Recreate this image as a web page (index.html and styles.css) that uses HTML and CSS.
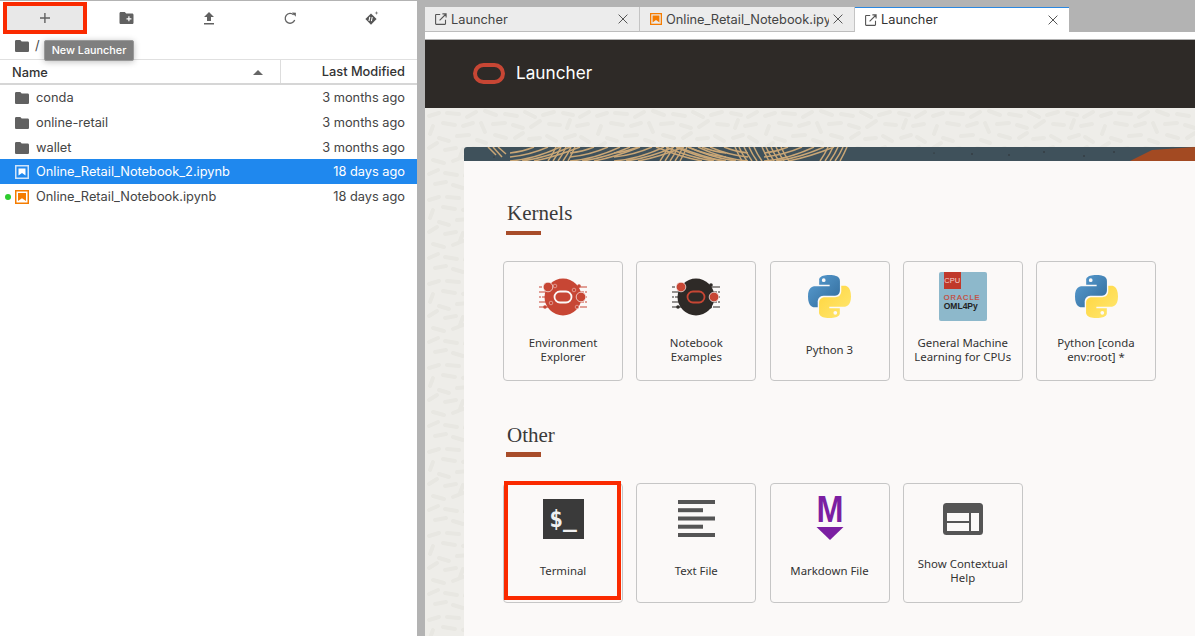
FILE: index.html
```html
<!DOCTYPE html>
<html lang="en">
<head>
<meta charset="utf-8">
<title>Launcher</title>
<link rel="stylesheet" href="styles.css">
</head>
<body>
<svg class="defs" width="0" height="0" aria-hidden="true">
  <defs>
    <linearGradient id="pyb" x1="0" y1="0" x2="1" y2="1"><stop offset="0" stop-color="#5a9fd4"/><stop offset="1" stop-color="#306998"/></linearGradient>
    <linearGradient id="pyy" x1="0" y1="0" x2="1" y2="1"><stop offset="0" stop-color="#ffe873"/><stop offset="1" stop-color="#ffd43b"/></linearGradient>
    <symbol id="python" viewBox="0 0 110 110">
      <path fill="url(#pyb)" fill-rule="evenodd" d="M54.9 0C26.8 0 28.6 12.2 28.6 12.2v12.6h26.8v3.8H17.9S0 26.6 0 54.9c0 28.3 15.6 27.3 15.6 27.3h9.3V69s-.5-15.6 15.4-15.6h26.5s14.9.2 14.9-14.4V14.8S84.1 0 54.9 0zM40.2 8.5a4.8 4.8 0 1 1 0 9.6 4.8 4.8 0 0 1 0-9.6z"/>
      <path fill="url(#pyy)" fill-rule="evenodd" transform="rotate(180 55 55)" d="M54.9 0C26.8 0 28.6 12.2 28.6 12.2v12.6h26.8v3.8H17.9S0 26.6 0 54.9c0 28.3 15.6 27.3 15.6 27.3h9.3V69s-.5-15.6 15.4-15.6h26.5s14.9.2 14.9-14.4V14.8S84.1 0 54.9 0zM40.2 8.5a4.8 4.8 0 1 1 0 9.6 4.8 4.8 0 0 1 0-9.6z"/>
    </symbol>
    <symbol id="folder" viewBox="0 0 14 12">
      <path d="M1.3 0h4l1.4 1.6h6c.7 0 1.3.6 1.3 1.3v7.8c0 .7-.6 1.3-1.3 1.3H1.3C.6 12 0 11.4 0 10.7V1.3C0 .6.6 0 1.3 0z"/>
    </symbol>
    <symbol id="launch" viewBox="0 0 12 12">
      <path fill="none" stroke="currentColor" stroke-width="1.1" d="M5.2 1.500H1.200a.6.6 0 0 0-.6.6v8.700c0 .3.3.6.6.6h8.700c.3 0 .6-.3.6-.6V6.800M4.600 7.400 11 1M7.400.9h3.700v3.700"/>
    </symbol>
    <symbol id="close" viewBox="0 0 10 10">
      <path fill="none" stroke="currentColor" stroke-width="1" d="M.6.6l8.800 8.800M9.400.6.6 9.400"/>
    </symbol>
    <g id="sw-a">
      <path d="M0 14Q25 12 50 0M0 10Q20 8 38 0M0 6Q12 5 24 0M12 14Q35 11 60 0M24 14Q45 10 70 0"/>
    </g>
    <g id="sw-b">
      <path d="M0 14Q5 7 8 0M5 14Q10 7 13 0M10 14Q15 7 18 0M15 14Q20 7 23 0M20 14Q24 7 27 0"/>
    </g>
  </defs>
</svg>

<div class="app">
  <aside class="sidebar">
    <div class="toolbar">
      <button class="tool tool-marked" type="button">
        <svg width="12" height="12" viewBox="0 0 12 12"><path d="M5.200 1h1.400v4.300H11v1.400H6.600V11H5.200V6.700H1V5.300h4.200z" fill="#616161"/></svg>
      </button>
      <button class="tool" type="button">
        <svg width="15" height="12" viewBox="0 0 14 12"><path fill="#616161" fill-rule="evenodd" d="M1.300 0h4l1.400 1.600h6c.7 0 1.300.6 1.300 1.300v7.800c0 .7-.6 1.300-1.300 1.300H1.300C.6 12 0 11.400 0 10.700V1.300C0 .6.6 0 1.300 0zM8.800 4.300v1.900H7v1.200h1.800v1.900H10V7.400h1.900V6.200H10V4.300z"/></svg>
      </button>
      <button class="tool" type="button">
        <svg width="12" height="13" viewBox="0 0 12 13"><path fill="#616161" d="M6 0l5 5H8v4H4V5H1zM1 11h10v1.600H1z"/></svg>
      </button>
      <button class="tool" type="button">
        <svg width="13" height="13" viewBox="0 0 13 13"><path fill="none" stroke="#616161" stroke-width="1.300" d="M10.700 8.100A4.900 4.900 0 1 1 9.600 2.900"/><path fill="#616161" d="M8 .6l3.900.1-.1 4z"/></svg>
      </button>
      <button class="tool" type="button">
        <svg width="16" height="16" viewBox="0 0 16 16"><path fill="#555" d="M7 3.500 12.600 9 7 14.700 1.400 9z"/><path stroke="#fff" stroke-width="1.100" d="M5.800 6.800 5 11M8.200 7 7.400 11.200"/><path fill="#777" d="M12.500 1l.5 1.500 1.500.5-1.500.5-.5 1.500-.5-1.500-1.500-.5 1.500-.5z"/></svg>
      </button>
    </div>
    <div class="crumbs">
      <svg class="folder-ico" width="14" height="12"><use href="#folder"/></svg>
      <span class="crumb-sep">/</span>
    </div>
    <div class="tooltip">New Launcher</div>
    <div class="file-head">
      <div class="col-name">Name<span class="sort-arrow"></span></div>
      <div class="col-mod">Last Modified</div>
    </div>
    <ul class="files">
      <li class="file"><svg class="folder-ico" width="14" height="12"><use href="#folder"/></svg><span class="fname">conda</span><span class="fdate">3 months ago</span></li>
      <li class="file"><svg class="folder-ico" width="14" height="12"><use href="#folder"/></svg><span class="fname">online-retail</span><span class="fdate">3 months ago</span></li>
      <li class="file"><svg class="folder-ico" width="14" height="12"><use href="#folder"/></svg><span class="fname">wallet</span><span class="fdate">3 months ago</span></li>
      <li class="file file-selected">
        <svg width="14" height="14" viewBox="0 0 14 14"><rect x=".75" y=".75" width="12.500" height="12.500" fill="none" stroke="#cfe4fa" stroke-width="1.500"/><path d="M3.500 3.500h7v7L7 8l-3.500 2.500z" fill="#fff"/></svg>
        <span class="fname">Online_Retail_Notebook_2.ipynb</span><span class="fdate">18 days ago</span>
      </li>
      <li class="file">
        <span class="running-dot"></span>
        <svg width="14" height="14" viewBox="0 0 14 14"><rect x=".75" y=".75" width="12.500" height="12.500" fill="none" stroke="#f57c00" stroke-width="1.500"/><path d="M3 3h8v8L7 8.300 3 11z" fill="#f57c00"/></svg>
        <span class="fname">Online_Retail_Notebook.ipynb</span><span class="fdate">18 days ago</span>
      </li>
    </ul>
  </aside>

  <main class="workspace">
    <div class="tabbar">
      <div class="tab">
        <svg class="tab-ico" width="12" height="12"><use href="#launch"/></svg>
        <span class="tab-label">Launcher</span>
        <svg class="tab-close" width="10" height="10"><use href="#close"/></svg>
      </div>
      <div class="tab">
        <svg class="tab-ico" width="12" height="12" viewBox="0 0 14 14"><rect x=".75" y=".75" width="12.500" height="12.500" fill="none" stroke="#f57c00" stroke-width="1.500"/><path d="M3 3h8v8L7 8.300 3 11z" fill="#f57c00"/></svg>
        <span class="tab-label">Online_Retail_Notebook.ipynb</span>
        <svg class="tab-close" width="10" height="10"><use href="#close"/></svg>
      </div>
      <div class="tab tab-active">
        <svg class="tab-ico" width="12" height="12"><use href="#launch"/></svg>
        <span class="tab-label">Launcher</span>
        <svg class="tab-close" width="10" height="10"><use href="#close"/></svg>
      </div>
    </div>
    <div class="tab-gap"></div>

    <header class="banner">
      <span class="oracle-mark"></span>
      <h1 class="banner-title">Launcher</h1>
    </header>

    <div class="launcher-bg">
      <section class="panel">
        <svg class="panel-strip" width="731" height="14" viewBox="0 0 731 14" aria-hidden="true">
          <rect width="731" height="14" fill="#3f515b"/>
          <g fill="none" stroke="#c9a676" stroke-width="1.500">
            <path d="M24 0 32 8M29 0 38 10M34 0 42 7"/>
            <use href="#sw-a" x="46"/>
            <use href="#sw-b" x="84"/>
            <use href="#sw-a" x="106"/>
            <use href="#sw-a" x="150"/>
            <use href="#sw-b" transform="translate(196 0)"/>
            <use href="#sw-a" transform="translate(284 0) scale(-1 1)"/>
            <use href="#sw-a" transform="translate(262 0) scale(-1 1)"/>
            <use href="#sw-b" transform="translate(325 0) scale(-1 1)"/>
            <use href="#sw-b" transform="translate(298 0) scale(-1 1)"/>
            <use href="#sw-a" x="300"/>
            <use href="#sw-b" x="356"/>
          </g>
          <g fill="#2a2a2a">
            <circle cx="508" cy="7" r=".7"/><circle cx="545" cy="8" r=".7"/><circle cx="580" cy="5" r=".7"/><circle cx="620" cy="9" r=".7"/><circle cx="650" cy="5" r=".7"/><circle cx="470" cy="6" r=".6"/><circle cx="30" cy="10" r=".6"/>
          </g>
          <path d="M666 14 688 3 731 0V14z" fill="#a34a22"/>
        </svg>

        <h2 class="section-title">Kernels</h2>
        <div class="section-rule"></div>
        <div class="cards">
          <div class="card">
            <div class="card-icon">
              <svg width="52" height="38" viewBox="0 0 52 38">
                <path stroke="#c74634" stroke-width="1.200" d="M2 9h48M2 14h48M2 19h48M2 24h48M2 29h48"/>
                <g fill="#fbf9f8"><path d="M5 8h1v2H5zM12 13h1v2h-1zM4 18h1v2H4zM9 23h1v2H9zM47 13h1v2h-1zM47 23h1v2h-1zM42 28h1v2h-1z"/></g>
                <circle cx="26" cy="19" r="18.500" fill="#c74634"/>
                <rect x="17.500" y="13.500" width="17" height="11" rx="5.500" fill="none" stroke="#fbf9f8" stroke-width="1.800"/>
                <circle cx="11" cy="9" r="4.800" fill="#c74634" stroke="#fbf9f8" stroke-width=".7"/>
                <circle cx="18" cy="8" r="1.800" fill="none" stroke="#e8b5ad" stroke-width=".7"/>
                <circle cx="14" cy="25" r="1.800" fill="none" stroke="#e8b5ad" stroke-width=".7"/>
                <circle cx="37" cy="12" r="1.800" fill="none" stroke="#e8b5ad" stroke-width=".7"/>
                <circle cx="44" cy="19" r="4.800" fill="#c74634" stroke="#fbf9f8" stroke-width=".7"/>
                <circle cx="40" cy="29" r="1.800" fill="#c74634" stroke="#e8b5ad" stroke-width=".7"/>
                <circle cx="42" cy="8" r="1.800" fill="#c74634"/>
                <circle cx="8" cy="29" r="1.800" fill="#c74634"/>
              </svg>
            </div>
            <div class="card-label">Environment Explorer</div>
          </div>
          <div class="card">
            <div class="card-icon">
              <svg width="52" height="38" viewBox="0 0 52 38">
                <path stroke="#2e2a27" stroke-width="1.200" d="M2 9h48M2 14h48M2 19h48M2 24h48M2 29h48"/>
                <g fill="#fbf9f8"><path d="M5 8h1v2H5zM12 13h1v2h-1zM4 18h1v2H4zM9 23h1v2H9zM47 13h1v2h-1zM47 23h1v2h-1zM42 28h1v2h-1z"/></g>
                <circle cx="26" cy="19" r="18.500" fill="#2e2a27"/>
                <rect x="17.500" y="13.500" width="17" height="11" rx="5.500" fill="none" stroke="#c74634" stroke-width="1.800"/>
                <circle cx="11" cy="9" r="4.800" fill="#c74634" stroke="#fbf9f8" stroke-width=".7"/>
                <circle cx="44" cy="19" r="4.800" fill="#c74634" stroke="#fbf9f8" stroke-width=".7"/>
                <circle cx="40" cy="29" r="1.800" fill="#2e2a27"/>
                <circle cx="41" cy="7" r="1.800" fill="#2e2a27"/>
                <circle cx="8" cy="29" r="1.800" fill="#2e2a27"/>
                <circle cx="14" cy="29" r="1.800" fill="#2e2a27"/>
              </svg>
            </div>
            <div class="card-label">Notebook Examples</div>
          </div>
          <div class="card">
            <div class="card-icon"><svg width="43" height="43"><use href="#python"/></svg></div>
            <div class="card-label">Python 3</div>
          </div>
          <div class="card">
            <div class="card-icon">
              <div class="oml">
                <span class="oml-cpu">CPU</span>
                <span class="oml-oracle">ORACLE</span>
                <span class="oml-name">OML4Py</span>
              </div>
            </div>
            <div class="card-label">General Machine Learning for CPUs</div>
          </div>
          <div class="card">
            <div class="card-icon"><svg width="43" height="43"><use href="#python"/></svg></div>
            <div class="card-label">Python [conda env:root] *</div>
          </div>
        </div>

        <h2 class="section-title section-other">Other</h2>
        <div class="section-rule section-rule-other"></div>
        <div class="cards cards-other">
          <div class="card card-marked">
            <div class="card-icon">
              <div class="term">$_</div>
            </div>
            <div class="card-label">Terminal</div>
          </div>
          <div class="card">
            <div class="card-icon">
              <svg width="37" height="37" viewBox="0 0 37 37" fill="#555"><rect width="37" height="4"/><rect y="8.200" width="25" height="4"/><rect y="16.500" width="37" height="4"/><rect y="24.700" width="25" height="4"/><rect y="33" width="37" height="4"/></svg>
            </div>
            <div class="card-label">Text File</div>
          </div>
          <div class="card">
            <div class="card-icon">
              <svg width="30" height="60" viewBox="0 -8 30 60">
                <text class="md-m" x="1.500" y="25" textLength="27" lengthAdjust="spacingAndGlyphs">M</text>
                <path d="M1.500 30h27L15 43z" fill="#7b1fa2"/>
              </svg>
            </div>
            <div class="card-label">Markdown File</div>
          </div>
          <div class="card">
            <div class="card-icon">
              <svg width="40" height="32" viewBox="0 0 40 32"><rect width="40" height="32" rx="3.500" fill="#555"/><path d="M4 10h22v8H4zM4 20h22v8H4zM28 10h8v18h-8z" fill="#fbf9f8"/></svg>
            </div>
            <div class="card-label">Show Contextual Help</div>
          </div>
        </div>
      </section>
    </div>
  </main>
</div>
</body>
</html>
```
FILE: styles.css
```css
* { box-sizing: border-box; }
html, body { margin: 0; height: 100%; overflow: hidden; }
body { font-family: "Inter", "Liberation Sans", sans-serif; color: #333; background: #b3b3b3; }
.defs { position: absolute; }
.app { display: flex; height: 636px; width: 1195px; }

.sidebar { position: relative; width: 417px; margin-right: 8px; margin-top: 1px; background: #fff; font-size: 12.800px; }
.toolbar { display: flex; justify-content: space-between; height: 32px; padding: 5px 7px 0; }
.tool { flex: 0 0 76px; height: 24px; border: 0; padding: 0; background: none; display: flex; align-items: center; justify-content: center; }
.tool-marked { position: relative; background: #e8e8e8; }
.tool-marked::after { content: ""; position: absolute; inset: -4px; border: 4px solid #fa2a00; }
.crumbs { height: 26px; padding: 0 0 1px 15px; display: flex; align-items: center; gap: 6px; color: #444; }
.folder-ico { fill: #616161; flex: none; }
.tooltip { position: absolute; left: 44px; top: 39px; width: 90px; height: 21px; background: #7f7f7f; border: 1px solid #999; border-radius: 2px; color: #fff; font-size: 10.800px; font-weight: 500; line-height: 19px; text-align: center; white-space: nowrap; box-shadow: 0 1px 6px rgba(0,0,0,.25); }
.file-head { display: flex; height: 26px; border-top: 1px solid #e0e0e0; border-bottom: 2px solid #d6d6d6; font-weight: 500; color: #333; }
.col-name { flex: 0 0 281px; display: flex; justify-content: space-between; align-items: center; padding: 1px 17px 0 12px; border-right: 1px solid #ddd; }
.sort-arrow { width: 0; height: 0; border: 5px solid transparent; border-top: 0; border-bottom: 5px solid #666; }
.col-mod { flex: 1; text-align: right; line-height: 24px; padding-right: 12px; }
.files { margin: 0; padding: 0; list-style: none; }
.file { position: relative; display: flex; align-items: center; height: 25px; padding: 0 12px 0 15px; gap: 7px; color: #444; }
.fname { flex: 1; }
.fdate { color: #444; }
.file-selected { margin-top: -1px; background: #1f88ee; color: #fff; }
.file-selected .fdate { color: #fff; }
.running-dot { position: absolute; left: 5px; top: 10px; width: 6px; height: 6px; border-radius: 50%; background: #2ecc2e; }

.workspace { flex: 1; min-width: 0; display: flex; flex-direction: column; }
.tabbar { display: flex; height: 25px; margin-top: 7px; }
.tab { width: 215px; display: flex; align-items: center; gap: 4px; padding: 0 11px 0 10px; background: #ececec; border-right: 1px solid #c4c4c4; border-bottom: 1px solid #bdbdbd; font-size: 12.800px; color: #444; }
.tab-ico { flex: none; color: #555; }
.tab-label { flex: 1; min-width: 0; white-space: nowrap; overflow: hidden; }
.tab-close { flex: none; color: #555; }
.tab-active { width: 214px; background: #fff; border: 0; box-shadow: inset 0 1px 0 #2a87e0; color: #333; }
.tab-gap { flex: none; height: 8px; background: #fff; border-bottom: 1px solid #b0b0b0; }
.banner { height: 68px; flex: none; background: #2e2a27; display: flex; align-items: center; gap: 11px; padding-left: 48px; }
.oracle-mark { width: 32px; height: 21px; margin-bottom: 1px; border: 4px solid #c74634; border-radius: 11px; }
.banner-title { margin: 0 0 3px; font: 400 17.200px "Inter", "Liberation Sans", sans-serif; color: #fff; }
.launcher-bg { flex: 1; min-height: 0; padding: 39px 0 0 39px; overflow: hidden; background-color: #eeede9; background-image: url("data:image/svg+xml,%3Csvg xmlns='http://www.w3.org/2000/svg' width='168' height='84'%3E%3Cg fill='none' stroke='%23e8e7e2' stroke-width='4' stroke-linecap='round'%3E%3Cpath d='M4 8l10-3M22 5l12 1M42 9l9-5M60 3l11 4M80 6l12 2M100 4l10 5M118 7l11-3M138 5l10 2M155 9l9-5M8 18l-3 8M18 15l12 2M38 18l10-3M56 15l4 9M68 16l12-1M88 17l10 3M106 19l9-6M124 16l11 1M142 20l3-8M152 18l11-2M14 30l10 3M32 28l12-1M52 32l9 3M70 27l11 3M90 30l8-5M104 31l11-1M122 28l9 5M140 30l10-3M156 29l8 5M4 40l8-5M20 42l11-2M38 41l-3 8M48 40l10 2M66 43l10-3M84 41l3 8M96 40l11 2M114 43l10-4M132 42l11 1M150 44l8-5M8 52l11 3M28 53l10-4M46 54l11 2M64 53l9-5M82 56l11-1M102 52l8 4M118 54l11-3M136 52l3 9M148 55l11 1M4 66l9-4M20 65l12 2M40 68l3-8M50 64l11 2M70 66l10 3M88 65l9-4M106 67l11 1M124 64l8 5M140 66l11-2M158 63l3 8M10 76l11-2M28 77l10 3M46 76l9-5M62 78l12-1M82 75l8 5M98 77l11-2M116 78l10 2M134 76l9-4M150 78l12 1'/%3E%3C/g%3E%3C/svg%3E"); }
.panel { width: 731px; height: 489px; background: #fbf9f8; border-radius: 3px 0 0 0; overflow: hidden; padding-left: 39px; }
.panel-strip { display: block; margin-left: -39px; }
.section-title { margin: 0; padding: 40px 0 0 4px; height: 66px; font: 400 21px/24px "Liberation Serif", "Times New Roman", serif; color: #3a3a3a; }
.section-other { height: 67px; padding-top: 42px; }
.section-rule { width: 35px; height: 4px; margin: 4px 0 0 3px; background: #a84d2a; }
.section-rule-other { height: 5px; }
.cards { display: flex; gap: 13.250px; margin-top: 26px; }
.card { position: relative; flex: none; width: 120px; height: 120px; background: #fbf9f8; border: 1px solid #c6c6c6; border-radius: 4px; display: flex; flex-direction: column; align-items: center; }
.card-icon { flex: none; height: 69px; display: flex; align-items: center; justify-content: center; width: 100%; }
.card-label { flex: 1; width: 100%; display: flex; align-items: center; justify-content: center; text-align: center; padding: 0 6px 11px; font: 400 11.400px/14px "Noto Sans", "Open Sans", sans-serif; color: #333; }
.cards-other .card-label { padding-bottom: 13px; }
.card-marked::after { content: ""; position: absolute; inset: -3px 1px 2px 0; border: 4px solid #fa2a00; pointer-events: none; }
.oml { position: relative; width: 48px; height: 49px; background: #8db8cb; border-radius: 2px; font-family: "Liberation Sans", sans-serif; }
.oml-cpu { position: absolute; left: 5px; top: 0; width: 17px; height: 17px; background: #c0392b; color: #f5d6d0; font-size: 7.500px; line-height: 17px; text-align: center; }
.oml-oracle { position: absolute; left: 5px; top: 23px; color: #c74634; font-size: 7.500px; line-height: 6px; letter-spacing: 1px; -webkit-text-stroke: .2px #c74634; }
.oml-name { position: absolute; left: 5px; top: 29px; color: #222; font-size: 8.500px; line-height: 10px; font-weight: 700; }
.term { width: 41px; height: 40px; background: #3a3a3a; color: #f0f0f0; font: 700 23px/40px "DejaVu Sans Mono", "Liberation Mono", monospace; text-align: center; }
.md-m { font: 700 36px "Liberation Sans", sans-serif; fill: #7b1fa2; }
```
